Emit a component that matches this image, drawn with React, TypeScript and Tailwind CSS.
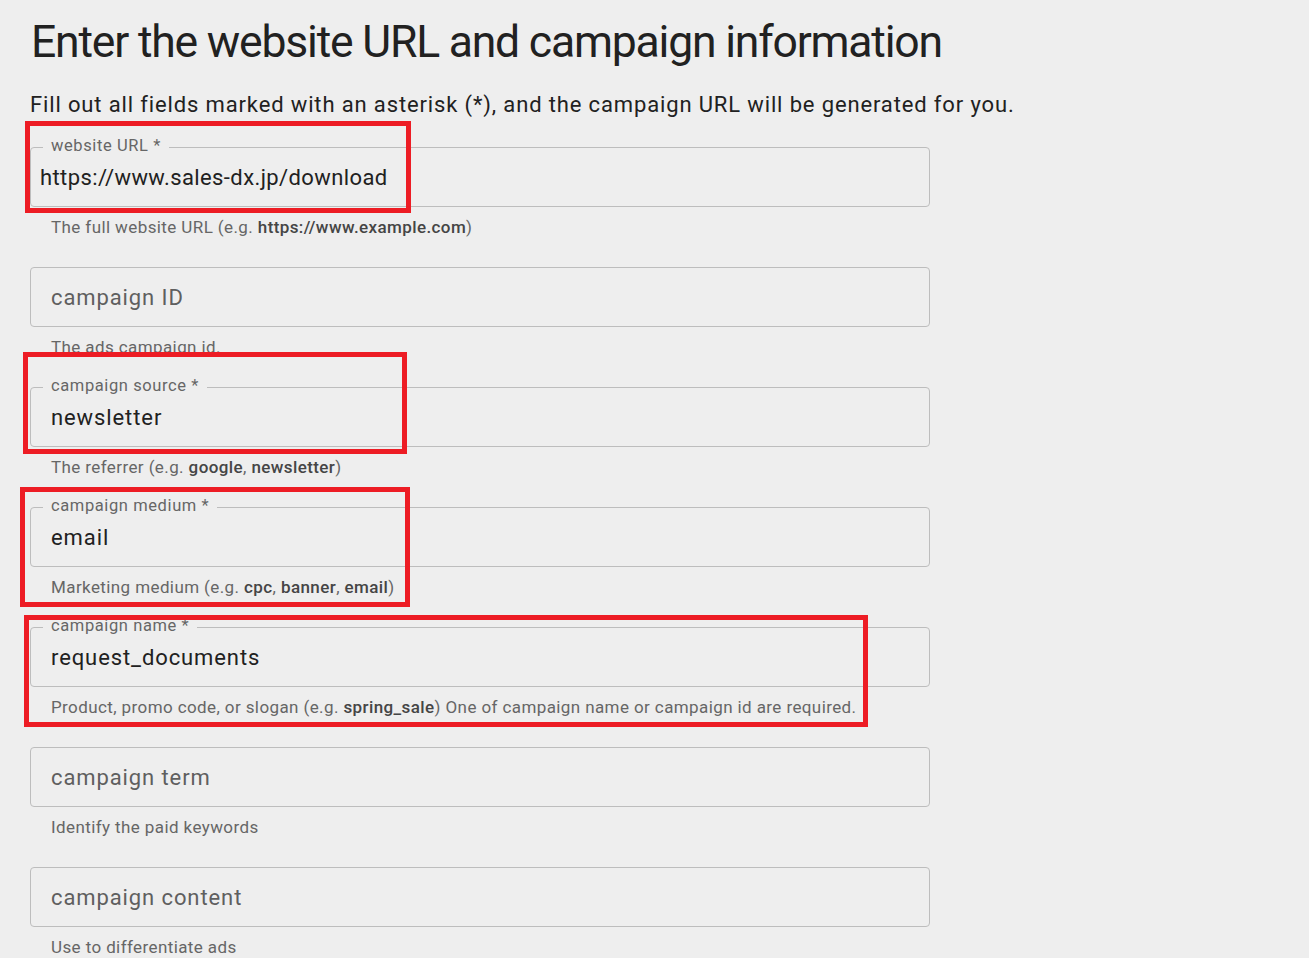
import type { ReactNode } from 'react';

interface FieldProps {
  label?: string;
  value?: string;
  placeholder?: string;
  helper: ReactNode;
  url?: boolean;
}

function Field({ label, value, placeholder, helper, url }: FieldProps) {
  return (
    <div className="mb-[30px]">
      <div className="relative flex h-[60px] w-[900px] items-center rounded-[4px] border border-[#bdbdbd]">
        {label && (
          <span className="absolute left-[12px] top-[-12px] bg-[#eeeeee] px-[8px] text-[16.5px] leading-[20px] tracking-[0.6px] text-[#666666]">
            {label}
          </span>
        )}
        <span
          className={`pt-[2px] text-[22px] leading-[30px] ${url ? 'pl-[9px] tracking-[0.4px]' : 'pl-[20px] tracking-[0.9px]'} ${value ? 'text-[#212121]' : 'text-[#5f5f5f]'}`}
        >
          {value ?? placeholder}
        </span>
      </div>
      <p className="mt-[10px] pl-[21px] text-[17px] leading-[20px] tracking-[0.4px] text-[#666666]">{helper}</p>
    </div>
  );
}

function B({ children }: { children: ReactNode }) {
  return <span className="font-medium text-[#454545]">{children}</span>;
}

export default function App() {
  return (
    <div className="relative min-h-screen overflow-hidden bg-[#eeeeee] px-[30px] pt-[14px] font-['Roboto','Liberation_Sans',sans-serif]">
      <h1 className="pl-[1px] text-[44.5px] leading-[56px] tracking-[-1.2px] text-[#212121]">
        Enter the website URL and campaign information
      </h1>
      <p className="mt-5 text-[22px] leading-[30px] tracking-[0.86px] text-[#212121]">
        Fill out all fields marked with an asterisk (*), and the campaign URL will be generated for you.
      </p>

      <div className="mt-[27px]">
        <Field
          label="website URL *"
          value="https://www.sales-dx.jp/download"
          url
          helper={
            <>
              The full website URL (e.g. <B>https://www.example.com</B>)
            </>
          }
        />
        <Field placeholder="campaign ID" helper="The ads campaign id." />
        <Field
          label="campaign source *"
          value="newsletter"
          helper={
            <>
              The referrer (e.g. <B>google</B>, <B>newsletter</B>)
            </>
          }
        />
        <Field
          label="campaign medium *"
          value="email"
          helper={
            <>
              Marketing medium (e.g. <B>cpc</B>, <B>banner</B>, <B>email</B>)
            </>
          }
        />
        <Field
          label="campaign name *"
          value="request_documents"
          helper={
            <>
              Product, promo code, or slogan (e.g. <B>spring_sale</B>) One of campaign name or campaign id are required.
            </>
          }
        />
        <Field placeholder="campaign term" helper="Identify the paid keywords" />
        <Field placeholder="campaign content" helper="Use to differentiate ads" />
      </div>

      {/* annotation boxes */}
      <div className="absolute left-[25px] top-[121px] h-[92px] w-[386px] border-[5px] border-[#ed1c24]" />
      <div className="absolute left-[23px] top-[352px] h-[102px] w-[384px] border-[5px] border-[#ed1c24]" />
      <div className="absolute left-[20px] top-[487px] h-[120px] w-[390px] border-[5px] border-[#ed1c24]" />
      <div className="absolute left-[24px] top-[615px] h-[112px] w-[844px] border-[5px] border-[#ed1c24]" />
    </div>
  );
}
